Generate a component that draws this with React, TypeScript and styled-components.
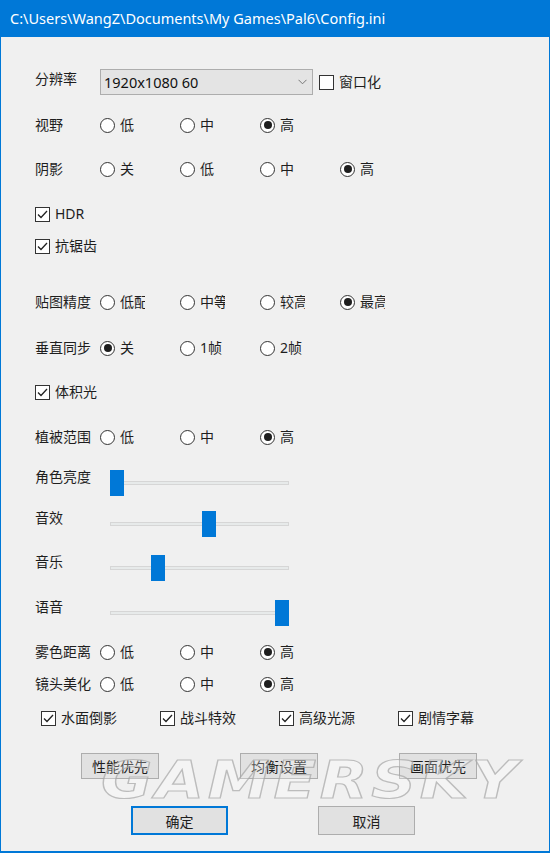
import React from "react";
import styled, { createGlobalStyle } from "styled-components";

const GlobalStyle = createGlobalStyle`
  html, body { margin: 0; padding: 0; background: #f0f0f0; }
  body { font-family: "Noto Sans CJK SC", "Noto Sans", sans-serif; }
  * { box-sizing: border-box; }
`;

const CJK = `"Noto Sans", "Noto Sans CJK SC", sans-serif`;
const BLUE = "#0078d7";

const Window = styled.div`
  position: relative;
  width: 550px;
  height: 853px;
  border: 1px solid ${BLUE};
  border-bottom-width: 2px;
  background: #f0f0f0;
  display: flex;
  flex-direction: column;
  overflow: hidden;
`;

const TitleBar = styled.div`
  height: 36px;
  background: ${BLUE};
  color: #fff;
  font-family: "Noto Sans", "Open Sans", sans-serif;
  font-size: 14.5px;
  line-height: 34px;
  padding-left: 9px;
  white-space: nowrap;
`;

const Body = styled.div`
  display: flex;
  flex-direction: column;
  padding-left: 34px;
  font-family: ${CJK};
  font-size: 14px;
  color: #1e1e1e;
`;

const Row = styled.div<{ $mt: number; $h?: number; $pl?: number; $gap?: number; $align?: string }>`
  display: flex;
  align-items: ${(p) => p.$align ?? "center"};
  height: ${(p) => p.$h ?? 24}px;
  margin-top: ${(p) => p.$mt}px;
  padding-left: ${(p) => p.$pl ?? 0}px;
  gap: ${(p) => p.$gap ?? 0}px;
`;

const Label = styled.div<{ $w: number; $dy?: number }>`
  width: ${(p) => p.$w}px;
  flex: none;
  line-height: 14px;
  white-space: nowrap;
  margin-top: ${(p) => p.$dy ?? 0}px;
  align-self: ${(p) => (p.$dy !== undefined ? "flex-start" : "auto")};
`;

const Select = styled.div`
  width: 213px;
  height: 26px;
  background: #e4e4e4;
  border: 1px solid #adadad;
  display: flex;
  align-items: center;
  justify-content: space-between;
  padding: 0 5px 0 3px;
  font-family: "Noto Sans", "Open Sans", sans-serif;
  font-size: 14.5px;
  color: #111;
`;

const Option = styled.div<{ $w?: number }>`
  display: flex;
  align-items: center;
  width: ${(p) => p.$w ?? 80}px;
  flex: none;
  gap: 5px;
  line-height: 18px;
  white-space: nowrap;
`;

const OptText = styled.span<{ $clip?: boolean }>`
  display: inline-block;
  overflow: ${(p) => (p.$clip ? "hidden" : "visible")};
  max-width: ${(p) => (p.$clip ? "25px" : "none")};
`;

const RadioCircle = styled.span<{ $on?: boolean }>`
  width: 15px;
  height: 15px;
  flex: none;
  border-radius: 50%;
  border: 1px solid #333;
  background: #fff;
  display: inline-flex;
  align-items: center;
  justify-content: center;
  &::after {
    content: "";
    width: 8px;
    height: 8px;
    border-radius: 50%;
    background: ${(p) => (p.$on ? "#1e1e1e" : "transparent")};
  }
`;

const Box = styled.span`
  width: 15px;
  height: 15px;
  flex: none;
  border: 1px solid #333;
  background: #fff;
  display: inline-flex;
  align-items: center;
  justify-content: center;
`;

const SliderBox = styled.div`
  position: relative;
  width: 179px;
  height: 26px;
  flex: none;
`;

const Track = styled.div`
  position: absolute;
  left: 0;
  right: 0;
  top: 11px;
  height: 4px;
  background: #e7eaea;
  border: 1px solid #d6d6d6;
`;

const Thumb = styled.div`
  position: absolute;
  top: 0;
  width: 14px;
  height: 26px;
  background: ${BLUE};
`;

const Button = styled.div<{ $w: number; $h: number; $primary?: boolean }>`
  width: ${(p) => p.$w}px;
  height: ${(p) => p.$h}px;
  flex: none;
  background: #e1e1e1;
  border: ${(p) => (p.$primary ? `2px solid ${BLUE}` : "1px solid #adadad")};
  display: flex;
  align-items: center;
  justify-content: center;
  font-size: 14px;
  color: #1e1e1e;
`;

const Watermark = styled.div`
  position: absolute;
  left: 100px;
  top: 749px;
  font-family: "DejaVu Sans", sans-serif;
  font-weight: bold;
  font-style: italic;
  font-size: 52px;
  letter-spacing: 3px;
  transform: scaleX(1.2);
  transform-origin: left top;
  color: rgba(255, 255, 255, 0.25);
  -webkit-text-stroke: 1.2px rgba(165, 165, 165, 0.7);
  pointer-events: none;
  white-space: nowrap;
`;

const Radio = ({ on, text, clip }: { on?: boolean; text: string; clip?: boolean }) => (
  <Option>
    <RadioCircle $on={on} />
    <OptText $clip={clip}>{text}</OptText>
  </Option>
);

const Check = ({ on, text, w }: { on?: boolean; text: string; w?: number }) => (
  <Option $w={w ?? 200}>
    <Box>
      {on && (
        <svg width="11" height="9" viewBox="0 0 11 9">
          <polyline points="1,4.5 4,7.5 10,1" fill="none" stroke="#222" strokeWidth="1.3" />
        </svg>
      )}
    </Box>
    <span>{text}</span>
  </Option>
);

const RadioRow = ({ mt, label, opts, sel, clip }: { mt: number; label: string; opts: string[]; sel: number; clip?: boolean }) => (
  <Row $mt={mt}>
    <Label $w={65}>{label}</Label>
    {opts.map((o, i) => (
      <Radio key={o} text={o} on={i === sel} clip={clip} />
    ))}
  </Row>
);

const SliderRow = ({ mt, label, value }: { mt: number; label: string; value: number }) => (
  <Row $mt={mt} $h={26} $align="flex-start">
    <Label $w={75}>{label}</Label>
    <SliderBox>
      <Track />
      <Thumb style={{ left: `${value * 165}px` }} />
    </SliderBox>
  </Row>
);

export default function App() {
  return (
    <>
      <GlobalStyle />
      <Window>
        <TitleBar>C:\Users\WangZ\Documents\My Games\Pal6\Config.ini</TitleBar>
        <Body>
          <Row $mt={32} $h={26}>
            <Label $w={65} $dy={3}>分辨率</Label>
            <Select>
              <span>1920x1080 60</span>
              <svg width="9" height="6" viewBox="0 0 9 6">
                <polyline points="0.5,0.8 4.5,4.8 8.5,0.8" fill="none" stroke="#777" strokeWidth="1" />
              </svg>
            </Select>
            <Row $mt={0} $pl={6}>
              <Check text="窗口化" w={80} />
            </Row>
          </Row>
          <RadioRow mt={18} label="视野" opts={["低", "中", "高"]} sel={2} />
          <RadioRow mt={20} label="阴影" opts={["关", "低", "中", "高"]} sel={3} />
          <Row $mt={21}>
            <Check on text="HDR" />
          </Row>
          <Row $mt={8}>
            <Check on text="抗锯齿" />
          </Row>
          <RadioRow mt={32} label="贴图精度" opts={["低配", "中等", "较高", "最高"]} sel={3} clip />
          <RadioRow mt={22} label="垂直同步" opts={["关", "1帧", "2帧"]} sel={0} />
          <Row $mt={20}>
            <Check on text="体积光" />
          </Row>
          <RadioRow mt={21} label="植被范围" opts={["低", "中", "高"]} sel={2} />
          <SliderRow mt={21} label="角色亮度" value={0} />
          <SliderRow mt={15} label="音效" value={0.557} />
          <SliderRow mt={18} label="音乐" value={0.248} />
          <SliderRow mt={19} label="语音" value={1} />
          <RadioRow mt={14} label="雾色距离" opts={["低", "中", "高"]} sel={2} />
          <RadioRow mt={8} label="镜头美化" opts={["低", "中", "高"]} sel={2} />
          <Row $mt={10} $pl={6}>
            <Check on text="水面倒影" w={119} />
            <Check on text="战斗特效" w={119} />
            <Check on text="高级光源" w={119} />
            <Check on text="剧情字幕" w={119} />
          </Row>
          <Row $mt={23} $h={26} $pl={46} $gap={81}>
            <Button $w={78} $h={26}>性能优先</Button>
            <Button $w={78} $h={26}>均衡设置</Button>
            <Button $w={78} $h={26}>画面优先</Button>
          </Row>
          <Row $mt={27} $h={29} $pl={96} $gap={90}>
            <Button $w={97} $h={29} $primary>确定</Button>
            <Button $w={97} $h={29}>取消</Button>
          </Row>
        </Body>
        <Watermark>GAMERSKY</Watermark>
      </Window>
    </>
  );
}
